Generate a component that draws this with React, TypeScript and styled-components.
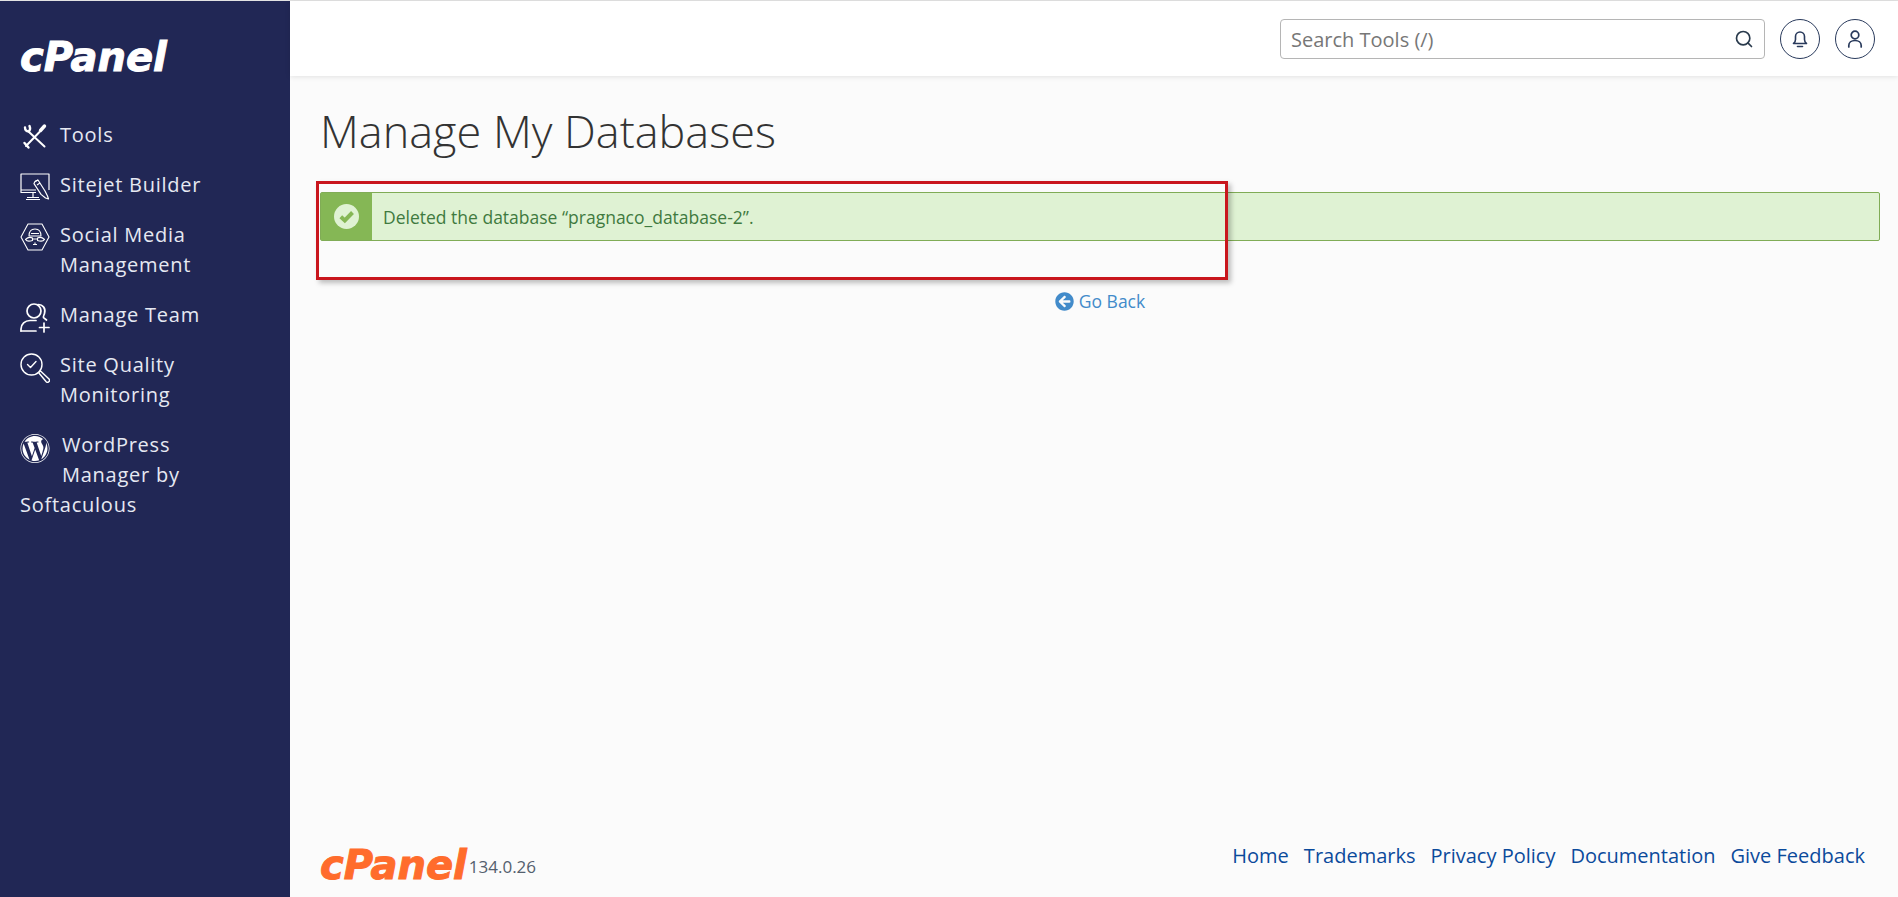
import styled, { createGlobalStyle } from 'styled-components'
import { Search } from 'lucide-react'
import { FaArrowCircleLeft, FaWordpress } from 'react-icons/fa'

const GlobalStyle = createGlobalStyle`
  html, body {
    margin: 0;
    padding: 0;
    height: 100%;
    overflow: hidden;
    background: #fbfbfb;
  }
  * {
    box-sizing: border-box;
  }
  body {
    font-family: "Open Sans", "Liberation Sans", sans-serif;
  }
`

const Page = styled.div`
  display: flex;
  height: 897px;
  border-top: 1px solid #e3e3e3;
  position: relative;
`

const Sidebar = styled.nav`
  flex: 0 0 290px;
  background: #212755;
  padding: 37px 30px 0 20px;
`

const Logo = styled.div<{ $color: string }>`
  font-family: "DejaVu Sans", sans-serif;
  font-weight: 700;
  font-style: italic;
  font-size: 40px;
  line-height: 38px;
  letter-spacing: 0;
  color: ${props => props.$color};
  -webkit-text-stroke: 1px ${props => props.$color};
`

const NavList = styled.div`
  margin-top: 44px;
`

const NavItem = styled.a`
  display: block;
  margin-bottom: 20px;
  font-size: 20px;
  line-height: 30px;
  letter-spacing: 0.75px;
  color: #e6e9f2;
`

const NavIcon = styled.span<{ $gap?: number }>`
  float: left;
  display: flex;
  width: 30px;
  height: 30px;
  margin-top: 3px;
  margin-right: ${props => props.$gap ?? 10}px;
  color: #fff;
`

const Main = styled.div`
  flex: 1;
  display: flex;
  flex-direction: column;
  min-width: 0;
`

const Header = styled.header`
  flex: 0 0 75px;
  background: #fff;
  box-shadow: 0 1px 5px rgba(0, 0, 0, 0.1);
  display: flex;
  align-items: center;
  justify-content: flex-end;
  gap: 15px;
  padding: 1px 23px 0 0;
`

const SearchBox = styled.div`
  width: 485px;
  height: 40px;
  border: 1px solid #b5b5b5;
  border-radius: 4px;
  display: flex;
  align-items: center;
  justify-content: space-between;
  padding: 0 10px;
  font-size: 20px;
  color: #777;
  background: #fff;
`

const RoundButton = styled.button`
  width: 40px;
  height: 40px;
  padding: 0;
  border: 1px solid #293a5c;
  border-radius: 50%;
  background: #fff;
  color: #293a5c;
  display: flex;
  align-items: center;
  justify-content: center;
`

const Content = styled.main`
  flex: 1;
  padding: 24px 18px 0 30px;
`

const Title = styled.h1`
  margin: 0;
  font-size: 45px;
  font-weight: 300;
  line-height: 62px;
  color: #333;
`

const Alert = styled.div`
  display: flex;
  height: 49px;
  margin-top: 30px;
  border: 1px solid #80ac56;
  border-radius: 2px;
  background: #dff2d3;
  color: #3f7a3f;
  font-size: 17.5px;
`

const AlertIconBox = styled.div`
  flex: 0 0 51px;
  background: #85b755;
  display: flex;
  align-items: center;
  justify-content: center;
`

const AlertText = styled.div`
  display: flex;
  align-items: center;
  padding-left: 11px;
`

const BackRow = styled.div`
  display: flex;
  justify-content: center;
  margin-top: 48px;
`

const BackLink = styled.a`
  display: flex;
  align-items: center;
  gap: 5px;
  font-size: 17.5px;
  line-height: 24px;
  color: #428bca;
`

const Footer = styled.footer`
  flex: 0 0 78px;
  display: flex;
  justify-content: space-between;
  padding: 0 33px 0 30px;
`

const Brand = styled.div`
  display: flex;
  align-items: flex-end;
  gap: 2px;
  padding-bottom: 13px;
`

const Version = styled.span`
  margin-bottom: 6px;
  font-size: 17px;
  line-height: 22px;
  color: #54606e;
`

const FooterLinks = styled.div`
  display: flex;
  gap: 15px;
  padding-top: 24px;
`

const FooterLink = styled.a`
  font-size: 20px;
  line-height: 26px;
  color: #0b4a9b;
`

const Highlight = styled.div`
  position: absolute;
  left: 316px;
  top: 180px;
  width: 912px;
  height: 99px;
  border: 3px solid #c9161d;
  box-shadow: 3px 3px 5px rgba(0, 0, 0, 0.25);
  pointer-events: none;
`

const ToolsIcon = () => (
  <svg viewBox="0 0 30 30" width="30" height="30" fill="none" stroke="currentColor" strokeWidth="2" strokeLinecap="round" strokeLinejoin="round">
    <path d="M5 4.500C5 7 6.500 8.500 8.500 8.500C10 7.500 10.500 5.500 9.500 3" strokeWidth="2.400" />
    <path d="M9 9L24.500 23.500" />
    <path d="M19.500 9L6 23" />
    <path d="M24.500 3L20.500 7.500" strokeWidth="3.400" />
    <path d="M4.500 20L8.500 24.500" strokeWidth="2.400" />
  </svg>
)

const SitejetIcon = () => (
  <svg viewBox="0 0 30 30" width="30" height="30" fill="none" stroke="currentColor" strokeWidth="1.200" strokeLinejoin="round">
    <path d="M16 19.500H1V1h28v16" />
    <path d="M1 17h15M13 19.500v5M7 24.500h12M6 26.500h14" />
    <path d="M15 8.500l3-1.500 7 11 2.500 5 1 3-3-1-4.500-3.600-7-10.800z" fill="#212755" />
    <path d="M18 7l-3 1.500M17 12l3-2" />
  </svg>
)

const SocialIcon = () => (
  <svg viewBox="0 0 30 30" width="30" height="30" fill="none" stroke="currentColor" strokeWidth="1.100" strokeLinejoin="round">
    <path d="M8 1h14l7 13-7 13H8L1 14z" />
    <path d="M9 13c0-4.500 2.500-7 6-7s6 2.500 6 7z" />
    <path d="M11 10.500h8M5.500 16.500c2-2 5-2.500 7-1.500v2.500c-3 1-6 .500-7-1zM24.500 16.500c-2-2-5-2.500-7-1.500v2.500c3 1 6 .500 7-1zM12.500 16h5M13 21.500h4M15 19.500v2" />
  </svg>
)

const TeamIcon = () => (
  <svg viewBox="0 0 30 30" width="30" height="30" fill="none" stroke="currentColor" strokeWidth="1.700" strokeLinecap="round" strokeLinejoin="round">
    <circle cx="14" cy="8" r="7" />
    <path d="M18 1.500c5 0 8 4 6.500 9-.500 1.700-1.500 3-1 4.200l3 2.300" />
    <path d="M1 28v-2c0-5 4-8.500 9-8.500h6" />
    <path d="M1 28h15M24 20v9M19.500 24.500H29" />
  </svg>
)

const QualityIcon = () => (
  <svg viewBox="0 0 30 30" width="30" height="30" fill="none" stroke="currentColor" strokeWidth="1.400" strokeLinecap="round" strokeLinejoin="round">
    <circle cx="11.500" cy="11.500" r="10.500" />
    <path d="M7.500 11.500l3 3 5.500-6" />
    <path d="M18.500 19.500l2-1.500 8.500 8c.800 1 .700 2-.200 2.800-.800.700-1.800.700-2.600 0l-7.700-9.300z" />
  </svg>
)

const BellIcon = () => (
  <svg viewBox="0 0 20 20" width="20" height="20" fill="none" stroke="currentColor" strokeWidth="1.600" strokeLinecap="round" strokeLinejoin="round">
    <path d="M3.500 14.500c1.500-1 2-2.200 2-4V7.500a4.500 4.500 0 0 1 9 0v3c0 1.800.500 3 2 4z" />
    <path d="M7.500 17.500h5" />
  </svg>
)

const UserIcon = () => (
  <svg viewBox="0 0 20 20" width="20" height="20" fill="none" stroke="currentColor" strokeWidth="1.700" strokeLinecap="round">
    <circle cx="10" cy="6" r="3.800" />
    <path d="M3.800 18v-1.500c0-3 2.500-5 6.200-5s6.200 2 6.200 5V18" />
  </svg>
)

const CheckBadge = () => (
  <svg viewBox="0 0 25 25" width="25" height="25">
    <circle cx="12.500" cy="12.500" r="12.500" fill="#dff2d3" />
    <path d="M6.800 12.800L10.800 16.500L18.500 8.500" fill="none" stroke="#85b755" strokeWidth="4" />
  </svg>
)

const navItems = [
  { label: 'Tools', icon: <ToolsIcon /> },
  { label: 'Sitejet Builder', icon: <SitejetIcon /> },
  { label: 'Social Media Management', icon: <SocialIcon /> },
  { label: 'Manage Team', icon: <TeamIcon /> },
  { label: 'Site Quality Monitoring', icon: <QualityIcon /> },
  { label: 'WordPress Manager by Softaculous', icon: <FaWordpress size={31} />, gap: 12 },
]

const footerLinks = ['Home', 'Trademarks', 'Privacy Policy', 'Documentation', 'Give Feedback']

export default function App() {
  return (
    <>
      <GlobalStyle />
      <Page>
        <Sidebar>
          <Logo $color="#ffffff">cPanel</Logo>
          <NavList>
            {navItems.map(item => (
              <NavItem key={item.label}>
                <NavIcon $gap={item.gap}>{item.icon}</NavIcon>
                {item.label}
              </NavItem>
            ))}
          </NavList>
        </Sidebar>
        <Main>
          <Header>
            <SearchBox>
              Search Tools (/)
              <Search size={20} color="#293a4c" strokeWidth={2} />
            </SearchBox>
            <RoundButton><BellIcon /></RoundButton>
            <RoundButton><UserIcon /></RoundButton>
          </Header>
          <Content>
            <Title>Manage My Databases</Title>
            <Alert>
              <AlertIconBox><CheckBadge /></AlertIconBox>
              <AlertText>Deleted the database “pragnaco_database-2”.</AlertText>
            </Alert>
            <BackRow>
              <BackLink><FaArrowCircleLeft size={19} />Go Back</BackLink>
            </BackRow>
          </Content>
          <Footer>
            <Brand>
              <Logo $color="#ff6c2c">cPanel</Logo>
              <Version>134.0.26</Version>
            </Brand>
            <FooterLinks>
              {footerLinks.map(link => <FooterLink key={link}>{link}</FooterLink>)}
            </FooterLinks>
          </Footer>
        </Main>
        <Highlight />
      </Page>
    </>
  )
}
